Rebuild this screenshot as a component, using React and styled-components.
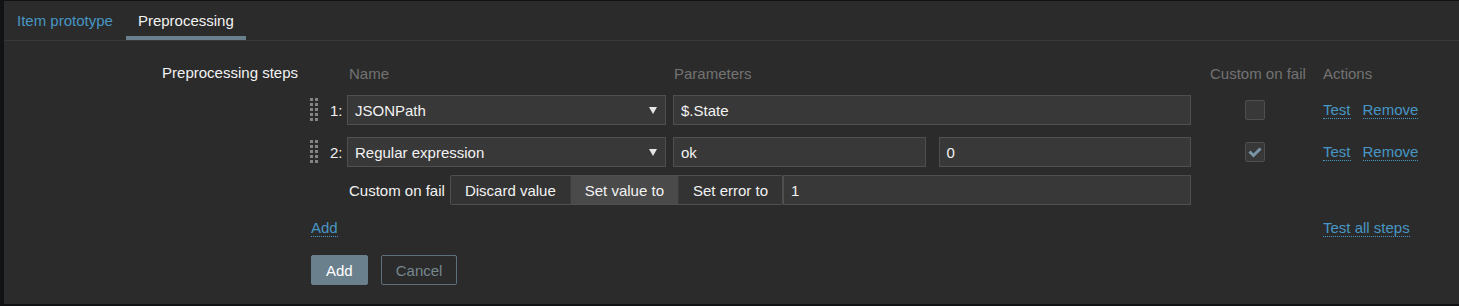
import React from "react";
import styled, { createGlobalStyle } from "styled-components";

const GlobalStyle = createGlobalStyle`
  body {
    margin: 0;
    background: #111214;
    font-family: "Liberation Sans", Arial, sans-serif;
    font-size: 15px;
    color: #f2f2f2;
  }
`;

const Panel = styled.div`
  margin: 1px 0 0 4px;
  height: 303px;
  background: #2b2b2b;
`;

const TabBar = styled.div`
  display: flex;
  gap: 1px;
  height: 39px;
  padding-left: 1px;
  border-bottom: 1px solid #383838;
`;

const Tab = styled.div`
  display: flex;
  align-items: center;
  padding: 4px 12px 0;
  color: ${(props) => (props.$active ? "#f2f2f2" : "#4796c4")};
  border-bottom: 4px solid ${(props) => (props.$active ? "#6a808c" : "transparent")};
`;

const Form = styled.div`
  display: grid;
  grid-template-columns: 306px 1fr;
  padding-top: 19px;
`;

const FormLabel = styled.div`
  text-align: right;
  padding-right: 12px;
  line-height: 26px;
`;

const Content = styled.div`
  display: flex;
  flex-direction: column;
`;

const HeaderRow = styled.div`
  display: flex;
  align-items: center;
  height: 26px;
  color: #737373;
`;

const HeadCell = styled.div`
  width: ${(props) => props.$w}px;
  padding-left: ${(props) => props.$pl || 0}px;
  text-align: ${(props) => props.$align || "left"};
  box-sizing: border-box;
`;

const StepRow = styled.div`
  display: flex;
  align-items: center;
  height: 30px;
  margin-top: ${(props) => props.$mt}px;
`;

const Handle = styled.div`
  width: 20px;
  display: flex;
  align-items: center;
`;

const Num = styled.div`
  width: 17px;
`;

const Select = styled.div`
  width: 319px;
  height: 30px;
  margin-right: 7px;
  box-sizing: border-box;
  display: flex;
  align-items: center;
  justify-content: space-between;
  padding: 0 8px 0 7px;
  background: #383838;
  border: 1px solid #4f4f4f;
`;

const Arrow = styled.span`
  width: 0;
  height: 0;
  border-left: 4px solid transparent;
  border-right: 4px solid transparent;
  border-top: 7px solid #e6e6e6;
`;

const Params = styled.div`
  width: 518px;
  display: flex;
  gap: 13px;
`;

const Input = styled.div`
  flex: 1;
  height: 30px;
  box-sizing: border-box;
  display: flex;
  align-items: center;
  padding: 0 7px;
  background: #383838;
  border: 1px solid #4f4f4f;
`;

const CustomCell = styled.div`
  width: 128px;
  display: flex;
  justify-content: center;
`;

const Checkbox = styled.div`
  width: 20px;
  height: 20px;
  box-sizing: border-box;
  border: 1px solid #4f4f4f;
  border-radius: 2px;
  background: #383838;
  display: flex;
  align-items: center;
  justify-content: center;
`;

const Actions = styled.div`
  margin-left: 4px;
  display: flex;
  gap: 12px;
`;

const Link = styled.span`
  color: #4796c4;
  border-bottom: 1px dotted #4796c4;
  line-height: 17px;
`;

const FailRow = styled.div`
  display: flex;
  align-items: center;
  height: 30px;
  width: 844px;
  margin: 8px 0 0 37px;
`;

const FailLabel = styled.div`
  padding-left: 2px;
  margin-right: 5px;
`;

const Segmented = styled.div`
  display: flex;
  height: 30px;
  box-sizing: border-box;
  border: 1px solid #4f4f4f;
  border-radius: 2px;
  overflow: hidden;
`;

const Segment = styled.div`
  display: flex;
  align-items: center;
  padding: 0 14px;
  background: ${(props) => (props.$selected ? "#4a4a4a" : "#333333")};
  border-left: ${(props) => (props.$first ? "none" : "1px solid #3a3a3a")};
`;

const FooterRow = styled.div`
  display: flex;
  align-items: center;
  height: 30px;
  margin-top: 7px;
`;

const FooterCell = styled.div`
  width: ${(props) => props.$w}px;
  padding-left: ${(props) => props.$pl || 0}px;
  box-sizing: border-box;
`;

const Buttons = styled.div`
  display: flex;
  gap: 13px;
  margin: 13px 0 0 1px;
`;

const Button = styled.button`
  height: 30px;
  padding: 0 14px;
  font: inherit;
  border-radius: 2px;
  border: 1px solid ${(props) => (props.$alt ? "#5d717d" : "#6a808c")};
  background: ${(props) => (props.$alt ? "transparent" : "#6a808c")};
  color: ${(props) => (props.$alt ? "#74878f" : "#ffffff")};
`;

const DragIcon = () => (
  <svg width="9" height="24" viewBox="0 0 9 24">
    {[0, 5, 10, 15, 20].map((y) =>
      [0, 5].map((x) => (
        <rect key={`${x}-${y}`} x={x} y={y} width="3" height="3" fill="#848484" />
      ))
    )}
  </svg>
);

const CheckMark = () => (
  <svg width="14" height="12" viewBox="0 0 14 12">
    <polyline points="1.5,5.5 5.5,9.5 12.5,2.5" fill="none" stroke="#7896a8" strokeWidth="3" />
  </svg>
);

const steps = [
  { n: 1, name: "JSONPath", params: ["$.State"], checked: false },
  { n: 2, name: "Regular expression", params: ["ok", "0"], checked: true },
];

const App = () => {
  return (
    <Panel>
      <GlobalStyle />
      <TabBar>
        <Tab>Item prototype</Tab>
        <Tab $active>Preprocessing</Tab>
      </TabBar>
      <Form>
        <FormLabel>Preprocessing steps</FormLabel>
        <Content>
          <HeaderRow>
            <HeadCell $w={37} />
            <HeadCell $w={326} $pl={2}>Name</HeadCell>
            <HeadCell $w={518} $pl={1}>Parameters</HeadCell>
            <HeadCell $w={132} $pl={19}>Custom on fail</HeadCell>
            <HeadCell $w={100}>Actions</HeadCell>
          </HeaderRow>
          {steps.map((s, i) => (
            <StepRow key={s.n} $mt={i === 0 ? 9 : 12}>
              <Handle>
                <DragIcon />
              </Handle>
              <Num>{s.n}:</Num>
              <Select>
                {s.name}
                <Arrow />
              </Select>
              <Params>
                {s.params.map((p) => (
                  <Input key={p}>{p}</Input>
                ))}
              </Params>
              <CustomCell>
                <Checkbox>{s.checked && <CheckMark />}</Checkbox>
              </CustomCell>
              <Actions>
                <Link>Test</Link>
                <Link>Remove</Link>
              </Actions>
            </StepRow>
          ))}
          <FailRow>
            <FailLabel>Custom on fail</FailLabel>
            <Segmented>
              <Segment $first>Discard value</Segment>
              <Segment $selected>Set value to</Segment>
              <Segment>Set error to</Segment>
            </Segmented>
            <Input>1</Input>
          </FailRow>
          <FooterRow>
            <FooterCell $w={1013} $pl={1}>
              <Link>Add</Link>
            </FooterCell>
            <FooterCell $w={120}>
              <Link>Test all steps</Link>
            </FooterCell>
          </FooterRow>
          <Buttons>
            <Button>Add</Button>
            <Button $alt>Cancel</Button>
          </Buttons>
        </Content>
      </Form>
    </Panel>
  );
};

export default App;
